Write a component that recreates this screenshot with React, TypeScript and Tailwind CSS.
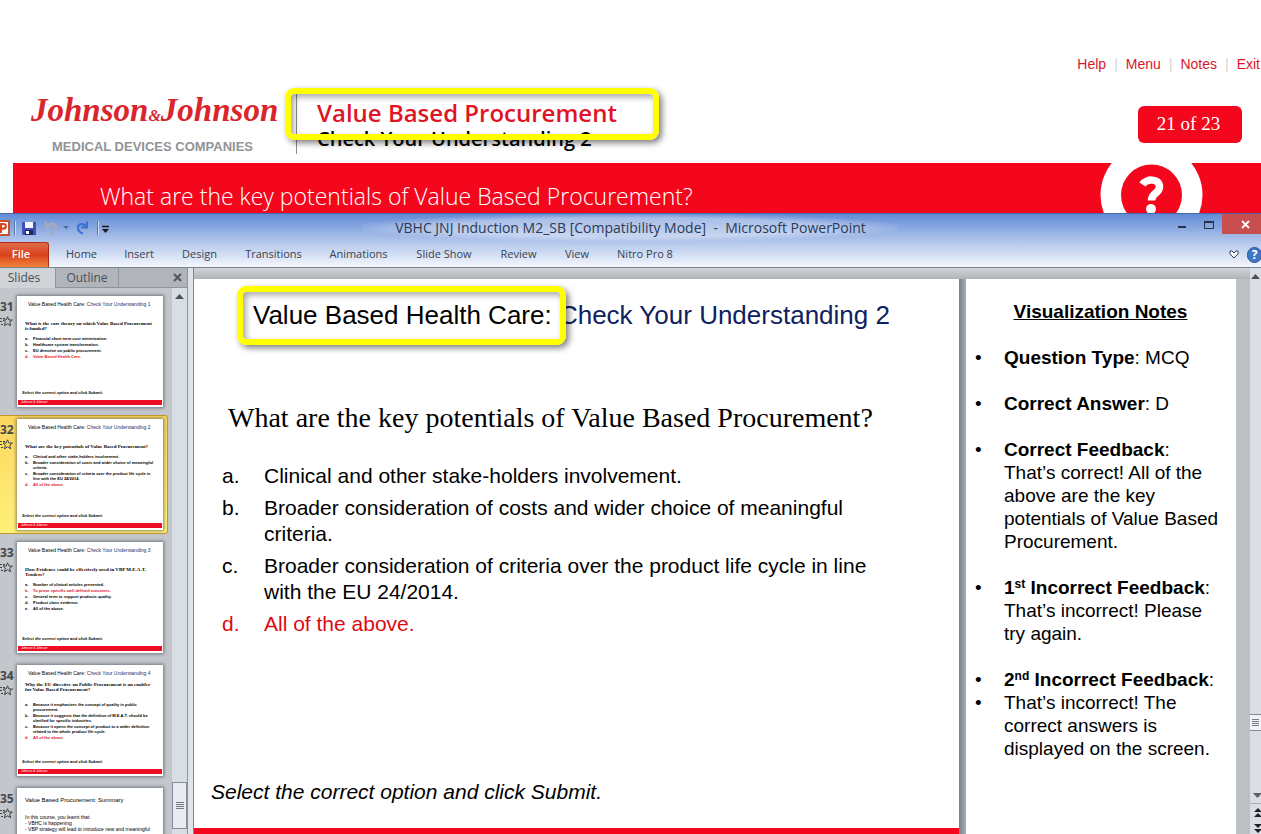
import type { ReactNode } from "react";

type Line = { mark?: string; text: string; red?: boolean };
type Thumb = {
  n: number;
  title: ReactNode;
  question?: string[];
  lines: Line[];
  gap?: boolean;
  selected?: boolean;
};

const vbhc = (n: number) => (
  <>
    Value Based Health Care: <span className="text-[#1f2f6b]">Check Your Understanding {n}</span>
  </>
);

const thumbs: Thumb[] = [
  {
    n: 31,
    title: vbhc(1),
    question: ["What is the core theory on which Value Based Procurement", "is funded?"],
    lines: [
      { mark: "a.", text: "Financial short term cost minimization." },
      { mark: "b.", text: "Healthcare system transformation." },
      { mark: "c.", text: "EU directive on public procurement." },
      { mark: "d.", text: "Value Based Health Care.", red: true },
    ],
  },
  {
    n: 32,
    selected: true,
    title: vbhc(2),
    question: ["What are the key potentials of Value Based Procurement?"],
    lines: [
      { mark: "a.", text: "Clinical and other stake-holders involvement." },
      { mark: "b.", text: "Broader consideration of costs and wider choice of meaningful criteria." },
      { mark: "c.", text: "Broader consideration of criteria over the product life cycle in line with the EU 24/2014." },
      { mark: "d.", text: "All of the above.", red: true },
    ],
  },
  {
    n: 33,
    title: vbhc(3),
    question: ["How Evidence could be effectively used in VBP M.E.A.T.", "Tenders?"],
    lines: [
      { mark: "a.", text: "Number of clinical articles presented." },
      { mark: "b.", text: "To prove specific well defined outcomes.", red: true },
      { mark: "c.", text: "General term to support products quality." },
      { mark: "d.", text: "Product class evidence." },
      { mark: "e.", text: "All of the above." },
    ],
  },
  {
    n: 34,
    title: vbhc(4),
    gap: true,
    question: ["Why the EU directive on Public Procurement is an enabler", "for Value Based Procurement?"],
    lines: [
      { mark: "a.", text: "Because it emphasizes the concept of quality in public procurement." },
      { mark: "b.", text: "Because it suggests that the definition of M.E.A.T. should be clarified for specific industries." },
      { mark: "c.", text: "Because it opens the concept of product to a wider definition related to the whole product life cycle." },
      { mark: "d.", text: "All of the above.", red: true },
    ],
  },
];

const answers: Line[] = [
  { mark: "a.", text: "Clinical and other stake-holders involvement." },
  { mark: "b.", text: "Broader consideration of costs and wider choice of meaningful criteria." },
  { mark: "c.", text: "Broader consideration of criteria over the product life cycle in line with the EU 24/2014." },
  { mark: "d.", text: "All of the above.", red: true },
];

const ribbon = [
  { label: "Home", width: "w-[65px]" },
  { label: "Insert", width: "w-[50px]" },
  { label: "Design", width: "w-[71px]" },
  { label: "Transitions", width: "w-[77px]" },
  { label: "Animations", width: "w-[93px]" },
  { label: "Slide Show", width: "w-[78px]" },
  { label: "Review", width: "w-[71px]" },
  { label: "View", width: "w-[46px]" },
  { label: "Nitro Pro 8", width: "w-[90px]" },
];

function TransitionStar() {
  return (
    <svg width="13" height="11" viewBox="0 0 13 11" fill="none" stroke="#3f4246" strokeWidth="1" aria-hidden="true">
      <path d="M7.5.8 8.9 4H12.400L9.700 6.200 10.700 9.800 7.500 7.800 4.400 9.800 5.400 6.200 3 4H6.200Z" />
      <path d="M0 2.500H5M0 5.500H3M1 8.500H4" strokeDasharray="2 1" />
    </svg>
  );
}

function SlideThumb({ t }: { t: Thumb }) {
  return (
    <li
      className={
        "flex h-[119px] w-[168px] shrink-0 " +
        (t.selected ? "rounded-r-[3px] border border-l-0 border-[#c39a2c] bg-linear-to-b from-[#fbd65f] to-[#fff07a] pt-[3px]" : "pt-1")
      }
    >
      <div className="flex w-[17px] shrink-0 flex-col gap-[1px] pt-[3px]">
        <span className="font-['Open_Sans',sans-serif] text-[12px] leading-[16px] font-bold text-[#44484d]">{t.n}</span>
        <TransitionStar />
      </div>
      <button className="flex h-[111px] w-[146px] shrink-0 flex-col overflow-hidden bg-white px-[1px] pb-[2px] text-left font-['Liberation_Sans',sans-serif] text-black shadow-[0_0_3px_1px_rgba(60,65,75,0.6)]">
        <span className="mt-[4px] ml-[10px] block text-[5px] leading-[8px] whitespace-nowrap">{t.title}</span>
        <span className={"ml-[7px] block font-['Liberation_Serif',serif] text-[5px] leading-[5px] font-bold whitespace-nowrap " + (t.gap ? "mt-[5px]" : "mt-[13px]")}>
          {t.question?.map((q) => (
            <span key={q} className="block">
              {q}
            </span>
          ))}
        </span>
        <span className={"block text-[4px] leading-[5px] font-bold " + (t.gap ? "mt-[10px]" : "mt-[5px] pr-[4px]")}>
          {t.lines.map((l) => (
            <span key={l.text} className={"mb-[1px] ml-[7px] flex gap-[4px] " + (l.red ? "text-[#e2142a]" : "")}>
              <span className="w-[4px] shrink-0">{l.mark}</span>
              <span>{l.text}</span>
            </span>
          ))}
        </span>
        <span className="mt-auto mb-[5px] ml-[4px] block text-[4px] leading-[5px] font-bold italic">Select the correct option and click Submit.</span>
        <span className="flex h-[5px] shrink-0 items-center bg-[#ec0d22] pl-[3px] text-[3px] leading-[3px] text-white italic">Johnson &amp; Johnson</span>
      </button>
    </li>
  );
}

function Answer({ a }: { a: Line }) {
  return (
    <li className={"flex " + (a.red ? "text-[#dd0a12]" : "")}>
      <span className="w-[42px] shrink-0">{a.mark}</span>
      <span>{a.text}</span>
    </li>
  );
}

function Note({ children }: { children: ReactNode }) {
  return (
    <li className="flex">
      <span className="w-[29px] shrink-0">•</span>
      <div>{children}</div>
    </li>
  );
}

function CourseHeader() {
  return (
    <header className="shrink-0 bg-white">
      <nav className="flex h-[88px] items-end justify-end gap-[8px] pr-[1px] pb-[14px] font-['Liberation_Sans',sans-serif] text-[14px] leading-5 text-[#d7182c]">
        <a href="#help">Help</a>
        <span className="text-[#d5d5d5]">|</span>
        <a href="#menu">Menu</a>
        <span className="text-[#d5d5d5]">|</span>
        <a href="#notes">Notes</a>
        <span className="text-[#d5d5d5]">|</span>
        <a href="#exit">Exit</a>
      </nav>
      <div className="flex h-[75px] items-start">
        <div className="flex w-[296px] shrink-0 flex-col pl-[31px]">
          <div className="h-[51px] font-['Liberation_Serif',serif] text-[33px] leading-[44px] font-bold whitespace-nowrap text-[#d9252c] italic">
            Johnson<span className="text-[16px]">&amp;</span>Johnson
          </div>
          <div className="ml-[21px] font-['Liberation_Sans',sans-serif] text-[13px] leading-[16px] font-bold whitespace-nowrap text-[#919396]">MEDICAL DEVICES COMPANIES</div>
        </div>
        <div className="relative mt-[6px] h-[60px] border-l border-[#8c8c8c] pl-[20px] font-['Open_Sans',sans-serif] font-semibold whitespace-nowrap">
          <h1 className="text-[24px] leading-[38px] text-[#df1426]">Value Based Procurement</h1>
          <p className="text-[20px] leading-[14px] text-black">Check Your Understanding 2</p>
          <div className="absolute top-[-6px] left-[-12px] h-[52px] w-[374px] rounded-[9px] border-6 border-[#ffff00] shadow-[3px_3px_6px_rgba(0,0,0,0.5),inset_3px_3px_6px_rgba(0,0,0,0.35)]" />
        </div>
        <div className="mt-[18px] mr-[19px] ml-auto flex h-[37px] w-[104px] items-center justify-center rounded-[6px] bg-[#f4071c] pr-[3px] font-['Liberation_Serif',serif] text-[19px] text-white">21 of 23</div>
      </div>
      <div className="ml-[13px] flex h-[50px] items-end justify-between bg-[#f4071c] pr-[58px] pl-[87px]">
        <h2 className="font-['Open_Sans',sans-serif] text-[23px] leading-[34px] font-light whitespace-nowrap text-white">What are the key potentials of Value Based Procurement?</h2>
        <svg width="103" height="50" viewBox="0 0 103 50" aria-hidden="true">
          <circle cx="51.500" cy="32" r="51" fill="#fff" />
          <circle cx="51.500" cy="32" r="30.500" fill="#f4071c" />
          <path d="M42.500 21.500C46 15.500 59.500 15 59.500 24C59.500 30.500 51.500 29.500 51.500 37.500" fill="none" stroke="#fff" strokeWidth="7.500" />
          <circle cx="51" cy="46" r="5" fill="#fff" />
        </svg>
      </div>
    </header>
  );
}

function TitleBar() {
  return (
    <div className="flex h-[28px] items-start">
      <div className="flex h-[28px] w-[260px] items-center">
        <svg width="110" height="18" viewBox="0 0 110 18" aria-hidden="true">
          <rect x="-4" y="2" width="13" height="14" fill="#fff" stroke="#c9512b" strokeWidth="2" />
          <path d="M1 14V5H3.500A2.300 2.300 0 0 1 3.500 9.700H1" fill="none" stroke="#d9451f" strokeWidth="2.200" />
          <path d="M14.500 2V16M97.500 2V16" stroke="#6076a3" />
          <path d="M15.500 2V16M98.500 2V16" stroke="#cfdcf3" />
          <path d="M22 3H36V16H23L22 15Z" fill="#3f4fb5" />
          <path d="M25 3H33V9H25Z" fill="#f4f7ff" />
          <path d="M25 11H33V16H25Z" fill="#1d2660" />
          <path d="M26 12H29V15H26Z" fill="#fff" />
          <path d="M46 2.500V8.500H52M46.500 8C50 3 56.500 4 56 9C55.600 12.500 53 14 50 15.500" fill="none" stroke="#a3abbd" strokeWidth="2.400" />
          <path d="M63 7H69L66 10Z" fill="#50679b" />
          <path d="M87 2.500V8.500H81M86.500 8C83 3 77.500 5 78 9.500C78.300 12 80 13.500 83 14.500" fill="none" stroke="#3a72d4" strokeWidth="2.200" />
          <path d="M102 7.500H109" stroke="#1a1a1a" strokeWidth="1.500" />
          <path d="M102 10H109L105.500 14Z" fill="#1a1a1a" />
        </svg>
      </div>
      <div className="flex flex-1 justify-center">
        <div className="bg-radial from-white/40 from-50% to-transparent to-75% px-8 font-['Open_Sans',sans-serif] text-[14px] leading-[27px] whitespace-pre text-[#2c3a55]">VBHC JNJ Induction M2_SB [Compatibility Mode]  -  Microsoft PowerPoint</div>
      </div>
      <div className="flex w-[260px] justify-end">
        <button aria-label="Minimize" className="flex h-[20px] w-[27px] justify-center pt-[12px]">
          <span className="h-[2px] w-[8px] bg-[#26324c]" />
        </button>
        <button aria-label="Maximize" className="flex h-[20px] w-[27px] justify-center pt-[7px]">
          <span className="h-[8px] w-[10px] border border-t-2 border-[#26324c]" />
        </button>
        <button aria-label="Close" className="flex h-[20px] w-[39px] items-center justify-center bg-[#c94f4f] pl-[7px]">
          <svg width="9" height="9" viewBox="0 0 9 9" stroke="#fff" strokeWidth="1.800">
            <path d="M1 1 8 8M8 1 1 8" />
          </svg>
        </button>
      </div>
    </div>
  );
}

function Ribbon() {
  return (
    <div className="flex h-[26px] items-stretch border-b border-[#76828f] font-['Open_Sans',sans-serif] text-[11px] text-[#3a4250]">
      <button className="w-[49px] rounded-tr-[3px] border-t border-r border-[#a83018] bg-linear-to-b from-[#e06a46] via-[#d9421b] to-[#f0813c] pr-[6px] pb-[1px] font-semibold text-white">File</button>
      {ribbon.map((r) => (
        <button key={r.label} className={r.width + " shrink-0 whitespace-nowrap"}>
          {r.label}
        </button>
      ))}
      <div className="ml-auto flex items-center gap-[8px]">
        <svg width="10" height="9" viewBox="0 0 10 9" fill="#fff" stroke="#33415e" aria-hidden="true">
          <path d="M1 1H3L5 3 7 1H9V4L5 8 1 4Z" />
        </svg>
        <button aria-label="Help" className="mr-[-1px] flex h-[16px] w-[15px] items-center justify-center rounded-full border border-[#2a5699] bg-[#3c77c8] text-[12px] font-bold text-white">?</button>
      </div>
    </div>
  );
}

function Sidebar() {
  return (
    <aside className="flex w-[188px] shrink-0 flex-col overflow-hidden border-r border-[#8c939b] bg-[#c3c6ca]">
      <div className="flex h-[20px] shrink-0 bg-[#b1b5ba] font-['Open_Sans',sans-serif] text-[12px] text-[#4a4f55]">
        <button className="w-[55px] bg-[#cfd2d6] pr-[7px]">Slides</button>
        <button className="w-[64px] border-x border-b border-[#8f959c]">Outline</button>
        <button aria-label="Close pane" className="flex flex-1 items-center justify-end border-b border-[#8f959c] pr-[5px]">
          <svg width="9" height="9" viewBox="0 0 9 9" stroke="#50555b" strokeWidth="2">
            <path d="M1 1 8 8M8 1 1 8" />
          </svg>
        </button>
      </div>
      <div className="flex min-h-0 flex-1">
        <ol className="flex w-[172px] shrink-0 flex-col gap-1 overflow-hidden pt-[4px]">
          {thumbs.map((t) => (
            <SlideThumb key={t.n} t={t} />
          ))}
          <li className="flex h-[119px] w-[168px] shrink-0 pt-1">
            <div className="flex w-[17px] shrink-0 flex-col gap-[1px] pt-[3px]">
              <span className="font-['Open_Sans',sans-serif] text-[12px] leading-[16px] font-bold text-[#44484d]">35</span>
              <TransitionStar />
            </div>
            <button className="flex h-[111px] w-[146px] shrink-0 flex-col overflow-hidden bg-white pl-[8px] text-left font-['Liberation_Sans',sans-serif] text-[5px] leading-[6px] text-black shadow-[0_0_3px_1px_rgba(60,65,75,0.6)]">
              <span className="mt-[9px] mb-[11px] text-[6px]">Value Based Procurement: Summary</span>
              <span>In this course, you learnt that:</span>
              <span>- VBHC is happening</span>
              <span>- VBP strategy will lead to introduce new and meaningful</span>
            </button>
          </li>
        </ol>
        <div className="flex flex-1 flex-col items-center bg-[#d9dde5] pt-[6px]">
          <svg width="9" height="5" viewBox="0 0 9 5" fill="#4c5158" aria-hidden="true">
            <path d="M0 5 4.500 0 9 5Z" />
          </svg>
          <div className="mt-auto mb-[5px] flex h-[47px] w-[15px] flex-col items-center justify-center gap-[1px] border border-[#868d98] bg-[#e8ebf1]">
            <span className="h-px w-[8px] bg-[#747b86]" />
            <span className="h-px w-[8px] bg-[#747b86]" />
            <span className="h-px w-[8px] bg-[#747b86]" />
            <span className="h-px w-[8px] bg-[#747b86]" />
          </div>
        </div>
      </div>
    </aside>
  );
}

function Slide() {
  return (
    <main className="flex min-w-0 flex-1 flex-col bg-white font-['Liberation_Sans',sans-serif] text-black">
      <div className="relative mt-[20px] ml-[59px] self-start">
        <h2 className="text-[26px] leading-8 whitespace-nowrap">
          Value Based Health Care: <span className="text-[#0e2160]">Check Your Understanding 2</span>
        </h2>
        <div className="absolute top-[-13px] left-[-16px] h-[59px] w-[329px] rounded-[9px] border-6 border-[#ffff00] shadow-[3px_3px_6px_rgba(0,0,0,0.5),inset_3px_3px_6px_rgba(0,0,0,0.35)]" />
      </div>
      <h3 className="mt-[69px] ml-[34px] font-['Liberation_Serif',serif] text-[28px] leading-9 whitespace-nowrap">What are the key potentials of Value Based Procurement?</h3>
      <ol className="mt-[27px] mr-[70px] ml-[28px] flex flex-col gap-[6px] text-[21px] leading-[26px]">
        {answers.map((a) => (
          <Answer key={a.text} a={a} />
        ))}
      </ol>
      <p className="mt-auto mb-[23px] ml-[17px] text-[21px] leading-[26px] italic">Select the correct option and click Submit.</p>
      <div className="h-[6px] shrink-0 bg-[#f4071c]" />
    </main>
  );
}

function Notes() {
  return (
    <section className="w-[270px] shrink-0 bg-white pt-[21px] pr-[10px] pl-[9px] font-['Liberation_Sans',sans-serif] text-[19px] leading-[23px] text-black">
      <h2 className="text-center font-bold underline">Visualization Notes</h2>
      <ul className="mt-[23px] flex flex-col gap-[23px]">
        <Note>
          <b>Question Type</b>: MCQ
        </Note>
        <Note>
          <b>Correct Answer</b>: D
        </Note>
        <Note>
          <b>Correct Feedback</b>:<br />
          That’s correct! All of the above are the key potentials of Value Based Procurement.
        </Note>
        <Note>
          <b>
            1<sup className="text-[12px] leading-none">st</sup> Incorrect Feedback
          </b>
          :<br />
          That’s incorrect! Please try again.
        </Note>
        <li>
          <ul>
            <Note>
              <b className="whitespace-nowrap">
                2<sup className="text-[12px] leading-none">nd</sup> Incorrect Feedback
              </b>
              :
            </Note>
            <Note>That’s incorrect! The correct answers is displayed on the screen.</Note>
          </ul>
        </li>
      </ul>
    </section>
  );
}

function EditorScroll() {
  return (
    <div className="flex w-[11px] shrink-0 flex-col items-center overflow-hidden bg-[#d9dde5]">
      <svg className="mt-[6px]" width="9" height="5" viewBox="0 0 9 5" fill="#4c5158" aria-hidden="true">
        <path d="M0 5 4.500 0 9 5Z" />
      </svg>
      <div className="mt-auto mb-[62px] flex h-[17px] w-[15px] flex-col items-center justify-center gap-[1px] border border-[#868d98] bg-[#f0f2f6]">
        <span className="h-px w-[7px] bg-[#747b86]" />
        <span className="h-px w-[7px] bg-[#747b86]" />
        <span className="h-px w-[7px] bg-[#747b86]" />
        <span className="h-px w-[7px] bg-[#747b86]" />
      </div>
      <svg width="11" height="41" viewBox="0 0 11 41" fill="#1c1f24" aria-hidden="true">
        <path d="M3 0H12L7.500 5Z" fill="#5a5f66" />
        <path d="M0 10.500H11" stroke="#aab0b9" />
        <path d="M4 19 8 15 12 19ZM4 24 8 20 12 24ZM4 31H12L8 35ZM4 36H12L8 40Z" />
      </svg>
    </div>
  );
}

export default function App() {
  return (
    <div className="flex h-screen min-h-[600px] flex-col overflow-hidden bg-white">
      <CourseHeader />
      <div className="flex min-h-0 flex-1 flex-col">
        <div className="shrink-0 border-t border-[#4668a8] bg-linear-to-b from-[#628bd6] via-[#b0c4ea] to-[#f7f9fd]">
          <TitleBar />
          <Ribbon />
        </div>
        <div className="flex min-h-0 flex-1">
          <Sidebar />
          <div className="w-[6px] shrink-0 border-r border-[#80868e] bg-[#dfe3ea]" />
          <div className="flex min-w-0 flex-1 bg-linear-to-b from-[#d0d3d7] to-[#b0b4b9] to-[11px]">
            <div className="mt-[11px] flex min-w-0 flex-1">
              <Slide />
              <div className="w-[7px] shrink-0 bg-linear-to-r from-[#788087] to-[#a9afb5]" />
              <Notes />
              <div className="w-[14px] shrink-0 bg-[#bcbfc4]" />
            </div>
            <EditorScroll />
          </div>
        </div>
      </div>
    </div>
  );
}
